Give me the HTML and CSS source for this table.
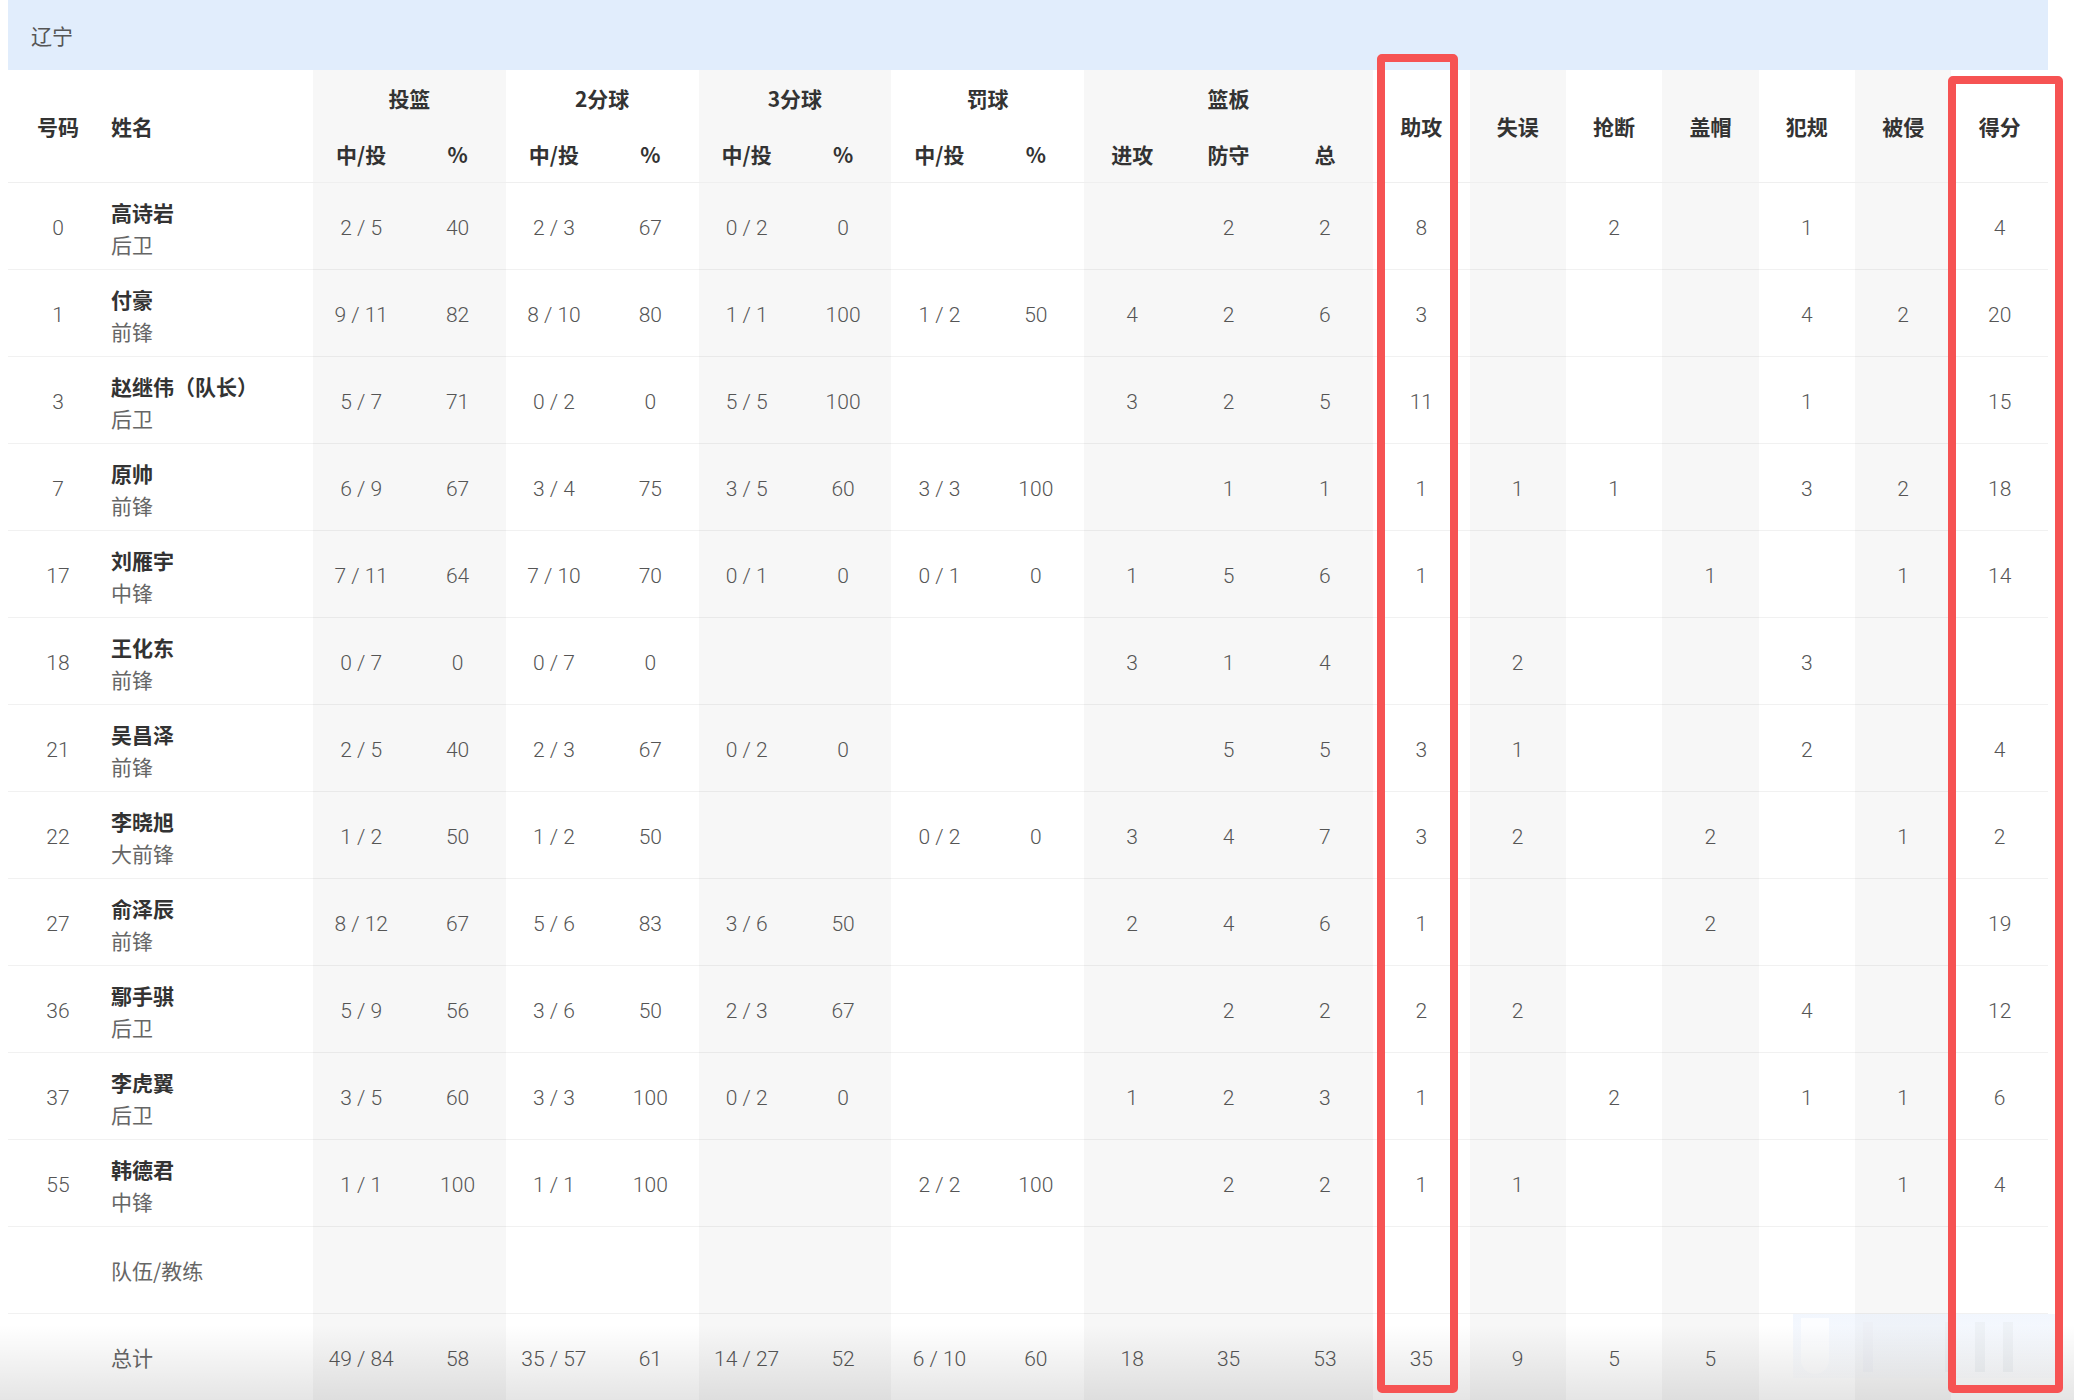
FILE: index.html
```html
<!DOCTYPE html>
<html lang="zh-CN">
<head>
<meta charset="utf-8">
<title>辽宁 技术统计</title>
<link rel="stylesheet" href="styles.css">
</head>
<body>
<div class="page">
  <div class="team">辽宁</div>
  <table class="stats">
    <colgroup>
      <col class="c-num"><col class="c-name">
      <col class="g"><col class="g">
      <col><col>
      <col class="g"><col class="g">
      <col><col>
      <col class="g"><col class="g"><col class="g">
      <col><col class="g"><col><col class="g"><col><col class="g"><col>
    </colgroup>
    <thead>
      <tr class="h1">
        <th rowspan="2" class="num">号码</th>
        <th rowspan="2" class="name">姓名</th>
        <th colspan="2">投篮</th>
        <th colspan="2">2分球</th>
        <th colspan="2">3分球</th>
        <th colspan="2">罚球</th>
        <th colspan="3">篮板</th>
        <th rowspan="2" class="span">助攻</th>
        <th rowspan="2" class="span">失误</th>
        <th rowspan="2" class="span">抢断</th>
        <th rowspan="2" class="span">盖帽</th>
        <th rowspan="2" class="span">犯规</th>
        <th rowspan="2" class="span">被侵</th>
        <th rowspan="2" class="span">得分</th>
      </tr>
      <tr class="h2">
        <th>中/投</th><th>%</th>
        <th>中/投</th><th>%</th>
        <th>中/投</th><th>%</th>
        <th>中/投</th><th>%</th>
        <th>进攻</th><th>防守</th><th>总</th>
      </tr>
    </thead>
    <tbody>
      <tr><td class="num">0</td><td class="name"><b>高诗岩</b><span>后卫</span></td><td>2 / 5</td><td>40</td><td>2 / 3</td><td>67</td><td>0 / 2</td><td>0</td><td></td><td></td><td></td><td>2</td><td>2</td><td>8</td><td></td><td>2</td><td></td><td>1</td><td></td><td>4</td></tr>
      <tr><td class="num">1</td><td class="name"><b>付豪</b><span>前锋</span></td><td>9 / 11</td><td>82</td><td>8 / 10</td><td>80</td><td>1 / 1</td><td>100</td><td>1 / 2</td><td>50</td><td>4</td><td>2</td><td>6</td><td>3</td><td></td><td></td><td></td><td>4</td><td>2</td><td>20</td></tr>
      <tr><td class="num">3</td><td class="name"><b>赵继伟（队长）</b><span>后卫</span></td><td>5 / 7</td><td>71</td><td>0 / 2</td><td>0</td><td>5 / 5</td><td>100</td><td></td><td></td><td>3</td><td>2</td><td>5</td><td>11</td><td></td><td></td><td></td><td>1</td><td></td><td>15</td></tr>
      <tr><td class="num">7</td><td class="name"><b>原帅</b><span>前锋</span></td><td>6 / 9</td><td>67</td><td>3 / 4</td><td>75</td><td>3 / 5</td><td>60</td><td>3 / 3</td><td>100</td><td></td><td>1</td><td>1</td><td>1</td><td>1</td><td>1</td><td></td><td>3</td><td>2</td><td>18</td></tr>
      <tr><td class="num">17</td><td class="name"><b>刘雁宇</b><span>中锋</span></td><td>7 / 11</td><td>64</td><td>7 / 10</td><td>70</td><td>0 / 1</td><td>0</td><td>0 / 1</td><td>0</td><td>1</td><td>5</td><td>6</td><td>1</td><td></td><td></td><td>1</td><td></td><td>1</td><td>14</td></tr>
      <tr><td class="num">18</td><td class="name"><b>王化东</b><span>前锋</span></td><td>0 / 7</td><td>0</td><td>0 / 7</td><td>0</td><td></td><td></td><td></td><td></td><td>3</td><td>1</td><td>4</td><td></td><td>2</td><td></td><td></td><td>3</td><td></td><td></td></tr>
      <tr><td class="num">21</td><td class="name"><b>吴昌泽</b><span>前锋</span></td><td>2 / 5</td><td>40</td><td>2 / 3</td><td>67</td><td>0 / 2</td><td>0</td><td></td><td></td><td></td><td>5</td><td>5</td><td>3</td><td>1</td><td></td><td></td><td>2</td><td></td><td>4</td></tr>
      <tr><td class="num">22</td><td class="name"><b>李晓旭</b><span>大前锋</span></td><td>1 / 2</td><td>50</td><td>1 / 2</td><td>50</td><td></td><td></td><td>0 / 2</td><td>0</td><td>3</td><td>4</td><td>7</td><td>3</td><td>2</td><td></td><td>2</td><td></td><td>1</td><td>2</td></tr>
      <tr><td class="num">27</td><td class="name"><b>俞泽辰</b><span>前锋</span></td><td>8 / 12</td><td>67</td><td>5 / 6</td><td>83</td><td>3 / 6</td><td>50</td><td></td><td></td><td>2</td><td>4</td><td>6</td><td>1</td><td></td><td></td><td>2</td><td></td><td></td><td>19</td></tr>
      <tr><td class="num">36</td><td class="name"><b>鄢手骐</b><span>后卫</span></td><td>5 / 9</td><td>56</td><td>3 / 6</td><td>50</td><td>2 / 3</td><td>67</td><td></td><td></td><td></td><td>2</td><td>2</td><td>2</td><td>2</td><td></td><td></td><td>4</td><td></td><td>12</td></tr>
      <tr><td class="num">37</td><td class="name"><b>李虎翼</b><span>后卫</span></td><td>3 / 5</td><td>60</td><td>3 / 3</td><td>100</td><td>0 / 2</td><td>0</td><td></td><td></td><td>1</td><td>2</td><td>3</td><td>1</td><td></td><td>2</td><td></td><td>1</td><td>1</td><td>6</td></tr>
      <tr><td class="num">55</td><td class="name"><b>韩德君</b><span>中锋</span></td><td>1 / 1</td><td>100</td><td>1 / 1</td><td>100</td><td></td><td></td><td>2 / 2</td><td>100</td><td></td><td>2</td><td>2</td><td>1</td><td>1</td><td></td><td></td><td></td><td>1</td><td>4</td></tr>
      <tr><td class="num"></td><td class="name plain">队伍/教练</td><td></td><td></td><td></td><td></td><td></td><td></td><td></td><td></td><td></td><td></td><td></td><td></td><td></td><td></td><td></td><td></td><td></td><td></td></tr>
      <tr><td class="num"></td><td class="name plain">总计</td><td>49 / 84</td><td>58</td><td>35 / 57</td><td>61</td><td>14 / 27</td><td>52</td><td>6 / 10</td><td>60</td><td>18</td><td>35</td><td>53</td><td>35</td><td>9</td><td>5</td><td>5</td><td></td><td></td><td></td></tr>
    </tbody>
  </table>
  <div class="watermark"><i class="wm-a"></i><i class="wm-b"></i><i class="wm-c"></i><i class="wm-d"></i><i class="wm-e"></i></div>
  <div class="fade"></div>
  <div class="mark mark-ast"></div>
  <div class="mark mark-pts"></div>
</div>
</body>
</html>
```

FILE: styles.css
```css
html, body {
  margin: 0;
  padding: 0;
  background: #ffffff;
}

body {
  width: 2074px;
  height: 1400px;
  overflow: hidden;
  font-family: "Noto Sans CJK SC", "Noto Sans", sans-serif;
}

.page {
  position: relative;
  width: 2040px;
  margin-left: 8px;
  height: 1400px;
}

.team {
  height: 70px;
  background: #e1edfc;
  color: #555555;
  font-size: 21px;
  line-height: 70px;
  padding-left: 23px;
  box-sizing: border-box;
}

.stats {
  width: 2040px;
  table-layout: fixed;
  border-collapse: separate;
  border-spacing: 0;
}

.c-num { width: 100px; }
.c-name { width: 205px; }
col.g { background: #f7f7f7; }

.stats th {
  padding: 0;
  font-size: 21px;
  font-weight: 700;
  color: #333333;
  text-align: center;
  vertical-align: middle;
}

.stats .h1 { height: 56px; }
.stats .h2 { height: 57px; }

.stats .h2 th,
.stats th.num,
.stats th.name,
.stats th.span {
  border-bottom: 1px solid #efefef;
}

.stats th.name {
  text-align: left;
  padding-left: 3px;
}

.stats tbody tr { height: 87px; }

.stats td {
  padding: 3px 0 0;
  border-bottom: 1px solid rgba(0, 0, 0, 0.055);
  text-align: center;
  vertical-align: middle;
  font-family: Roboto, "Noto Sans CJK SC", sans-serif;
  font-weight: 300;
  font-size: 21px;
  color: #555555;
  white-space: nowrap;
}

.stats td.name {
  text-align: left;
  padding-left: 3px;
  font-family: "Noto Sans CJK SC", sans-serif;
  font-weight: 400;
  font-size: 21px;
  line-height: 32px;
  padding-top: 3px;
}

.stats td.name b {
  display: block;
  font-weight: 700;
  color: #333333;
}

.stats td.name span {
  display: block;
  color: #666666;
}

.stats td.name.plain {
  color: #666666;
  padding-top: 0;
}

.watermark {
  position: absolute;
  left: 1785px;
  top: 1314px;
  width: 262px;
  height: 64px;
  background: linear-gradient(to bottom, rgba(226, 236, 252, 0.45), rgba(236, 242, 252, 0.15));
  pointer-events: none;
}

.watermark i {
  position: absolute;
  display: block;
  background: rgba(255, 255, 255, 0.7);
}

.watermark .wm-a { left: 8px; top: 4px; width: 28px; height: 56px; border-radius: 0 0 14px 14px; }
.watermark .wm-b { left: 70px; top: 8px; width: 10px; height: 50px; background: rgba(235, 238, 244, 0.5); }
.watermark .wm-c { left: 152px; top: 8px; width: 10px; height: 50px; background: rgba(232, 235, 240, 0.5); }
.watermark .wm-d { left: 182px; top: 8px; width: 10px; height: 50px; background: rgba(232, 235, 240, 0.5); }
.watermark .wm-e { left: 210px; top: 8px; width: 10px; height: 50px; background: rgba(232, 235, 240, 0.5); }

.fade {
  position: absolute;
  left: -8px;
  width: 2074px;
  top: 1325px;
  height: 75px;
  background: linear-gradient(to bottom, rgba(0, 0, 0, 0), rgba(0, 0, 0, 0.1));
  pointer-events: none;
}

.mark {
  position: absolute;
  border: 8px solid #f65353;
  border-radius: 5px;
  box-sizing: border-box;
  pointer-events: none;
}

.mark-ast {
  left: 1369px;
  top: 54px;
  width: 81px;
  height: 1339px;
}

.mark-pts {
  left: 1940px;
  top: 76px;
  width: 115px;
  height: 1317px;
}
```
